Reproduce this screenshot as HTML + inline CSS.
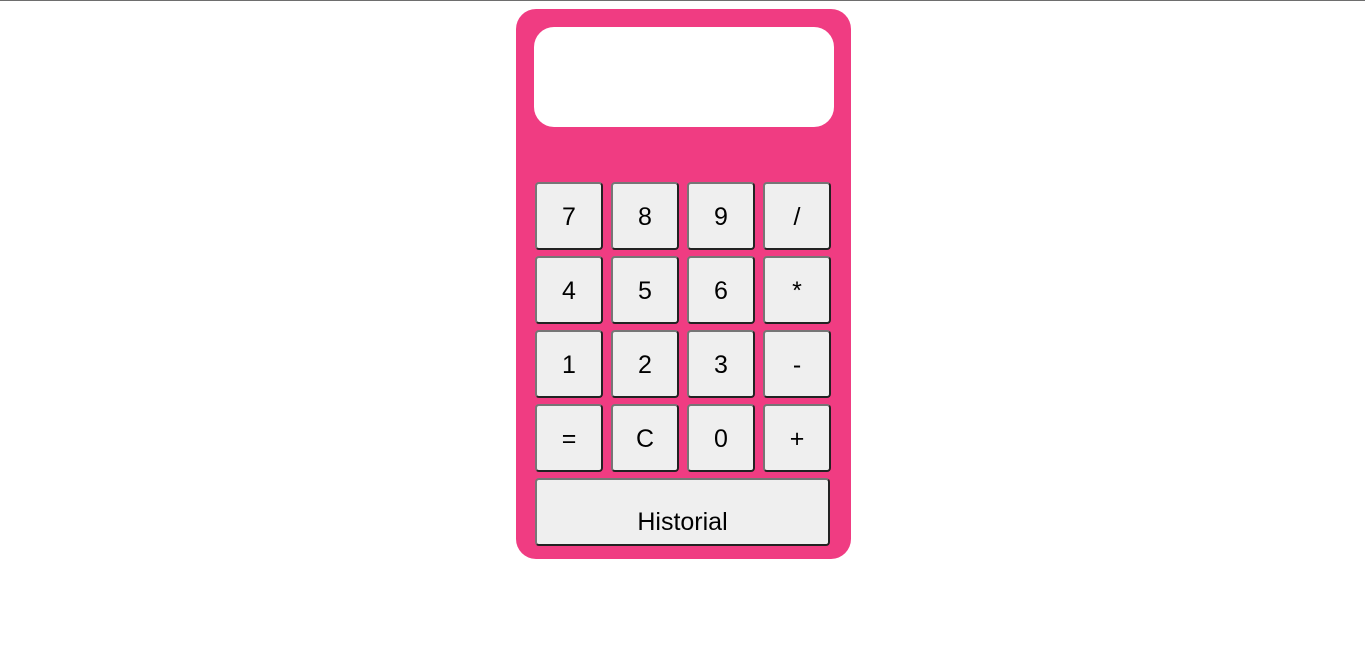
<!DOCTYPE html>
<html><head><style>
html,body{margin:0;padding:0;background:#fff;}
body{width:1365px;height:658px;position:relative;font-family:"Liberation Sans",Arial,sans-serif;}
.line{position:absolute;left:0;top:0;width:1365px;height:1px;background:#6e6e6e;}
.calc{position:absolute;left:516px;top:9px;width:335px;height:550px;background:#f03c82;border-radius:20px;}
.disp{position:absolute;left:18px;top:18px;width:300px;height:100px;background:#fff;border-radius:20px;}
.b{position:absolute;width:68px;height:68px;box-sizing:border-box;background:#efefef;border:2px solid;border-color:#767676 #222 #222 #767676;border-radius:4px;font-size:25px;color:#000;display:flex;align-items:center;justify-content:center;padding-top:2px;}
.h{width:295px;align-items:flex-end;padding-top:0;padding-bottom:7px;}
</style></head><body>
<div class="line"></div>
<div class="calc"><div class="disp"></div></div>
<div class="b" style="left:535px;top:182px">7</div>
<div class="b" style="left:611px;top:182px">8</div>
<div class="b" style="left:687px;top:182px">9</div>
<div class="b" style="left:763px;top:182px">/</div>
<div class="b" style="left:535px;top:256px">4</div>
<div class="b" style="left:611px;top:256px">5</div>
<div class="b" style="left:687px;top:256px">6</div>
<div class="b" style="left:763px;top:256px">*</div>
<div class="b" style="left:535px;top:330px">1</div>
<div class="b" style="left:611px;top:330px">2</div>
<div class="b" style="left:687px;top:330px">3</div>
<div class="b" style="left:763px;top:330px">-</div>
<div class="b" style="left:535px;top:404px">=</div>
<div class="b" style="left:611px;top:404px">C</div>
<div class="b" style="left:687px;top:404px">0</div>
<div class="b" style="left:763px;top:404px">+</div>
<div class="b h" style="left:535px;top:478px">Historial</div>
</body></html>
